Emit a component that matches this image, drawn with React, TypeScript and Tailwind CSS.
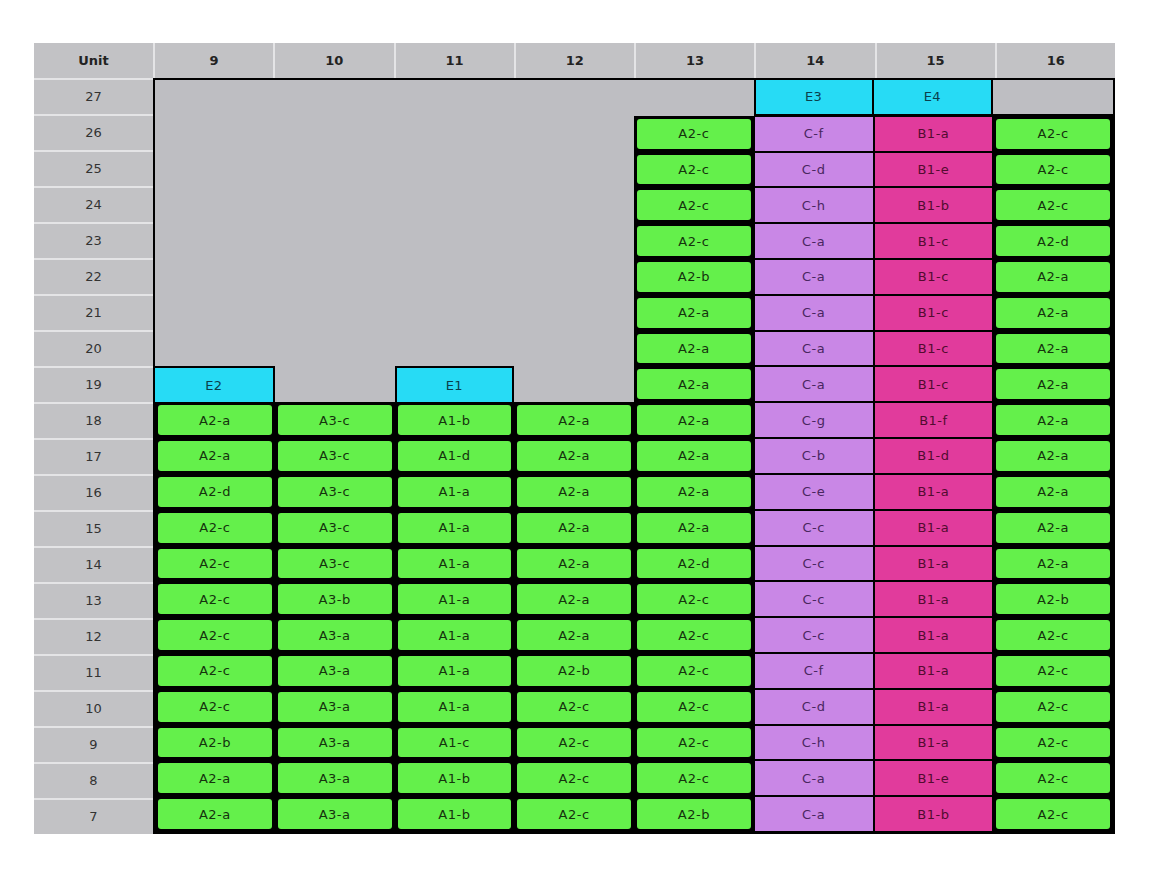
import React from "react";

type Kind = "empty" | "green" | "purple" | "magenta" | "cyan" | "boxed";

interface Cell {
  kind: Kind;
  label?: string;
  cls?: string;
}

const cols = [9, 10, 11, 12, 13, 14, 15, 16];
const rows = Array.from({ length: 21 }, (_, i) => 27 - i);

const low: Record<number, string[]> = {
  9: ["A2-a", "A2-a", "A2-d", "A2-c", "A2-c", "A2-c", "A2-c", "A2-c", "A2-c", "A2-b", "A2-a", "A2-a"],
  10: ["A3-c", "A3-c", "A3-c", "A3-c", "A3-c", "A3-b", "A3-a", "A3-a", "A3-a", "A3-a", "A3-a", "A3-a"],
  11: ["A1-b", "A1-d", "A1-a", "A1-a", "A1-a", "A1-a", "A1-a", "A1-a", "A1-a", "A1-c", "A1-b", "A1-b"],
  12: ["A2-a", "A2-a", "A2-a", "A2-a", "A2-a", "A2-a", "A2-a", "A2-b", "A2-c", "A2-c", "A2-c", "A2-c"],
};
const col13 = ["A2-c", "A2-c", "A2-c", "A2-c", "A2-b", "A2-a", "A2-a", "A2-a", "A2-a", "A2-a", "A2-a", "A2-a", "A2-d", "A2-c", "A2-c", "A2-c", "A2-c", "A2-c", "A2-c", "A2-b"];
const col14 = ["C-f", "C-d", "C-h", "C-a", "C-a", "C-a", "C-a", "C-a", "C-g", "C-b", "C-e", "C-c", "C-c", "C-c", "C-c", "C-f", "C-d", "C-h", "C-a", "C-a"];
const col15 = ["B1-a", "B1-e", "B1-b", "B1-c", "B1-c", "B1-c", "B1-c", "B1-c", "B1-f", "B1-d", "B1-a", "B1-a", "B1-a", "B1-a", "B1-a", "B1-a", "B1-a", "B1-a", "B1-e", "B1-b"];
const col16 = ["A2-c", "A2-c", "A2-c", "A2-d", "A2-a", "A2-a", "A2-a", "A2-a", "A2-a", "A2-a", "A2-a", "A2-a", "A2-a", "A2-b", "A2-c", "A2-c", "A2-c", "A2-c", "A2-c", "A2-c"];

function getCell(col: number, row: number): Cell {
  if (col <= 12) {
    if (row >= 20) return { kind: "empty" };
    if (row === 19) {
      if (col === 9) return { kind: "cyan", label: "E2", cls: "border-t-2 border-r-2" };
      if (col === 11) return { kind: "cyan", label: "E1", cls: "border-t-2 border-l-2 border-r-2" };
      return { kind: "empty" };
    }
    return { kind: "green", label: low[col][18 - row] };
  }
  if (row === 27) {
    if (col === 13) return { kind: "empty" };
    if (col === 14) return { kind: "cyan", label: "E3", cls: "border-l-2 border-r-2 border-b-2" };
    if (col === 15) return { kind: "cyan", label: "E4", cls: "border-r-2 border-b-2" };
    return { kind: "boxed" };
  }
  const idx = 26 - row;
  if (col === 13) return { kind: "green", label: col13[idx] };
  if (col === 14) return { kind: "purple", label: col14[idx] };
  if (col === 15) return { kind: "magenta", label: col15[idx] };
  return { kind: "green", label: col16[idx] };
}

const txt = "text-[13px] tracking-[0.5px] leading-none";

function CellView({ cell }: { cell: Cell }) {
  switch (cell.kind) {
    case "empty":
      return <div className="bg-[#bebec2]" />;
    case "boxed":
      return <div className="bg-[#bebec2] border-b-2 border-black" />;
    case "cyan":
      return (
        <div className={`bg-[#27dbf5] border-black flex items-center justify-center text-[#0a3f4c] ${txt} ${cell.cls ?? ""}`}>
          {cell.label}
        </div>
      );
    case "green":
      return (
        <div className="bg-black p-[3px] flex">
          <div className={`flex-1 bg-[#64f04b] rounded-[3px] flex items-center justify-center text-[#15330d] ${txt}`}>
            {cell.label}
          </div>
        </div>
      );
    case "purple":
      return (
        <div className="bg-black p-[1px] flex">
          <div className={`flex-1 bg-[#c987e6] flex items-center justify-center text-[#4a2660] ${txt}`}>
            {cell.label}
          </div>
        </div>
      );
    case "magenta":
      return (
        <div className="bg-black p-[1px] flex">
          <div className={`flex-1 bg-[#e13b9c] flex items-center justify-center text-[#520c30] ${txt}`}>
            {cell.label}
          </div>
        </div>
      );
  }
}

export default function App() {
  return (
    <div
      className="w-[1155px] h-[873px] bg-white pt-[43px] pl-[34px]"
      style={{ fontFamily: '"DejaVu Sans", Verdana, sans-serif' }}
    >
      <div className="w-[1081px]">
        <div className="flex h-[35px]">
          <div className="w-[119px] bg-[#c2c2c5] flex items-center justify-center text-[13px] font-bold text-[#222]">
            Unit
          </div>
          <div className="flex-1 grid grid-cols-8">
            {cols.map((c) => (
              <div
                key={c}
                className="bg-[#c2c2c5] border-l-2 border-[#e4e4e6] flex items-center justify-center text-[13px] font-bold text-[#222]"
              >
                {c}
              </div>
            ))}
          </div>
        </div>
        <div className="flex">
          <div className="w-[119px] flex flex-col h-[756px]">
            {rows.map((r) => (
              <div
                key={r}
                className="flex-1 bg-[#c2c2c5] border-t-2 border-[#e4e4e6] flex items-center justify-center text-[13px] text-[#333]"
              >
                {r}
              </div>
            ))}
          </div>
          <div className="flex-1 h-[756px] border-2 border-black grid grid-cols-8 grid-rows-[repeat(21,1fr)]">
            {rows.map((r) =>
              cols.map((c) => <CellView key={`${r}-${c}`} cell={getCell(c, r)} />)
            )}
          </div>
        </div>
      </div>
    </div>
  );
}
